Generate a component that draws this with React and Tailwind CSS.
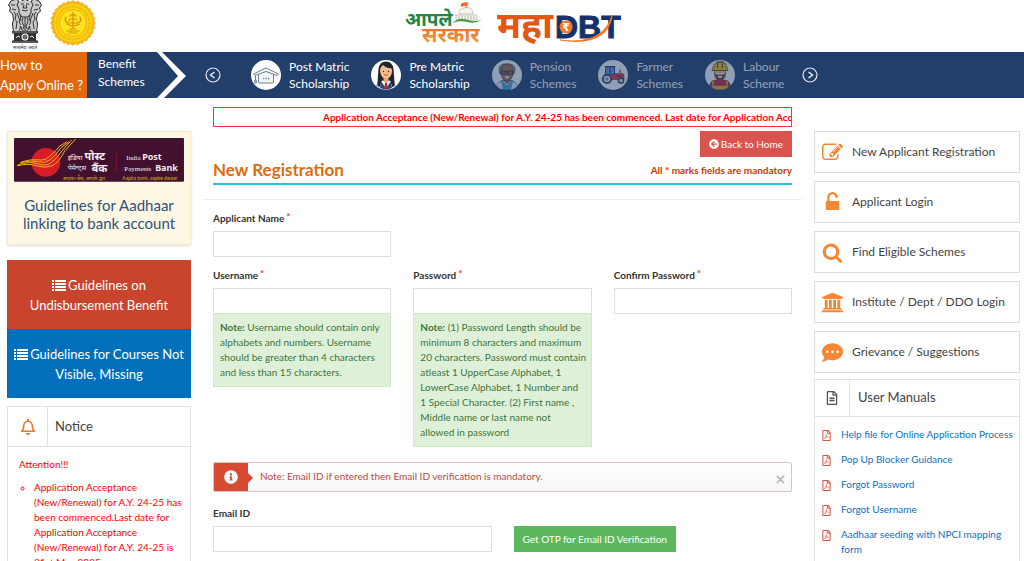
import React from "react";
import { FaArrowCircleLeft, FaCommentDots, FaInfoCircle, FaRegBell, FaRegFileAlt, FaRegFilePdf } from "react-icons/fa";

const schemes = [
  { title: ["Post Matric", "Scholarship"], Art: CapArt },
  { title: ["Pre Matric", "Scholarship"], Art: GirlArt },
  { title: ["Pension", "Schemes"], Art: ElderArt, dim: true },
  { title: ["Farmer", "Schemes"], Art: TractorArt, dim: true },
  { title: ["Labour", "Scheme"], Art: WorkerArt, dim: true },
];

const menu = [
  { label: "New Applicant Registration", Icon: PencilIcon },
  { label: "Applicant Login", Icon: UnlockIcon },
  { label: "Find Eligible Schemes", Icon: SearchIcon },
  { label: "Institute / Dept / DDO Login", Icon: BankIcon },
  { label: "Grievance / Suggestions", Icon: FaCommentDots },
];

const manuals = [
  "Help file for Online Application Process",
  "Pop Up Blocker Guidance",
  "Forgot Password",
  "Forgot Username",
  "Aadhaar seeding with NPCI mapping form",
];

/* ---------- icons ---------- */

function PencilIcon(props) {
  return (
    <svg viewBox="0 0 1792 1792" fill="currentColor" {...props}>
      <path d="M888 1184l116-116-152-152-116 116v56h96v96h56zm440-720q-16-16-33 1l-350 350q-17 17-1 33t33-1l350-350q17-17 1-33zm80 594v190q0 119-84.500 203.500t-203.500 84.500h-832q-119 0-203.500-84.500t-84.500-203.500v-832q0-119 84.500-203.500t203.500-84.500h832q63 0 117 25 15 7 18 23 3 17-9 29l-49 49q-14 14-32 8-23-6-45-6h-832q-66 0-113 47t-47 113v832q0 66 47 113t113 47h832q66 0 113-47t47-113v-126q0-13 9-22l64-64q15-15 35-7t20 29zm-96-738l288 288-672 672h-288v-288zm444 132l-92 92-288-288 92-92q28-28 68-28t68 28l152 152q28 28 28 68t-28 68z" />
    </svg>
  );
}

function UnlockIcon(props) {
  return (
    <svg viewBox="0 0 1792 1792" fill="currentColor" {...props}>
      <path d="M1376 768q40 0 68 28t28 68v576q0 40-28 68t-68 28h-960q-40 0-68-28t-28-68v-576q0-40 28-68t68-28h32v-320q0-185 131.500-316.500t316.500-131.500 316.500 131.500 131.500 316.500q0 26-19 45t-45 19h-64q-26 0-45-19t-19-45q0-106-75-181t-181-75-181 75-75 181v320h736z" />
    </svg>
  );
}

function SearchIcon(props) {
  return (
    <svg viewBox="0 0 1792 1792" fill="currentColor" {...props}>
      <path d="M1216 832q0-185-131.500-316.500t-316.500-131.500-316.500 131.500-131.500 316.500 131.500 316.500 316.500 131.500 316.500-131.500 131.500-316.500zm512 832q0 52-38 90t-90 38q-54 0-90-38l-343-342q-179 124-399 124-143 0-273.500-55.500t-225-150-150-225-55.500-273.500 55.500-273.500 150-225 225-150 273.500-55.500 273.500 55.500 225 150 150 225 55.500 273.500q0 220-124 399l343 343q37 37 37 90z" />
    </svg>
  );
}

function BankIcon(props) {
  return (
    <svg viewBox="-128 0 1920 1792" fill="currentColor" {...props}>
      <path d="M832 0l960 384v128h-128q0 26-20.500 45t-48.500 19h-1526q-28 0-48.500-19t-20.500-45h-128v-128zm-704 640h256v768h128v-768h256v768h128v-768h256v768h128v-768h256v768h59q28 0 48.500 19t20.500 45v64h-1664v-64q0-26 20.500-45t48.500-19h59v-768zm1595 960q28 0 48.500 19t20.500 45v128h-1920v-128q0-26 20.500-45t48.500-19h1782z" />
    </svg>
  );
}

function ListIcon() {
  return (
    <svg viewBox="0 0 14 11" fill="currentColor" shapeRendering="crispEdges" className="mr-[2px] inline-block h-[11px] w-[14px] align-[-1px]">
      <path d="M0 0h2v2H0zM3 0h11v2H3zM0 3h2v2H0zM3 3h11v2H3zM0 6h2v2H0zM3 6h11v2H3zM0 9h2v2H0zM3 9h11v2H3z" />
    </svg>
  );
}

function RoundArrow({ flip }) {
  return (
    <svg viewBox="0 0 16 16" fill="none" stroke="#e4e9f2" className="size-4">
      <circle cx="8" cy="8" r="7" strokeWidth="1.200" />
      <path d={flip ? "M6.500 5l4 3-4 3" : "M9.500 5l-4 3 4 3"} strokeWidth="1.500" />
    </svg>
  );
}

/* ---------- scheme pictures ---------- */

function CapArt() {
  return (
    <svg viewBox="0 0 30 30" className="size-[30px]">
      <circle cx="15" cy="15" r="15" fill="#fff" />
      <g fill="#f2f6f8" stroke="#5c7180" strokeWidth="0.900" strokeLinejoin="round">
        <path d="M7.500 13.500 15 11l7.500 2.500V22q0 1-1 1h-13q-1 0-1-1z" />
        <path d="M2.500 14 15 8l12.500 6-1.500 1.500L15 11.500 4 15.500z" />
        <path d="M4.500 15v5M3.800 20h1.500v3H3.800z" />
      </g>
      <path d="M12 18.500h1.500M14.500 18.500H16M17 18.500h1.500" stroke="#7e909d" strokeWidth="1.500" />
    </svg>
  );
}

function GirlArt() {
  return (
    <svg viewBox="0 0 30 30" className="size-[30px]">
      <circle cx="15" cy="15" r="15" fill="#fff" />
      <path d="M6.500 26C7 20 7 15 7.500 9Q8.500 1.500 15 1.500T22.500 9c.5 6 .5 11 1 17z" fill="#20242c" />
      <path d="M5.500 27q.5-5 6-6.500h7q5.500 1.500 6 6.500Q20 30 15 30T5.500 27z" fill="#f3f6fb" stroke="#26354e" strokeWidth="0.500" />
      <path d="M7 14q2 6 3.500 7L9 27l-2.500-1zM23 14q-2 6-3.500 7l1.500 6 2.500-1z" fill="#20242c" />
      <path d="M10.500 21.500 15 29l4.500-7.500 1.500 6.200Q15 31 9 27.700z" fill="#2a4776" />
      <path d="M12.500 17h5v4L15 23.500 12.500 21z" fill="#e8a173" />
      <path d="M9 11q0-4 3-6 3 3 8.500 3.500.8 1 .5 3.500-1 6.500-6 6.500T9 11z" fill="#f6bb8c" />
      <circle cx="12.500" cy="11.500" r="0.700" fill="#222" />
      <circle cx="17.500" cy="11.500" r="0.700" fill="#222" />
      <path d="M13 14.500q2 1.500 4 0" fill="none" stroke="#943c31" strokeWidth="0.800" />
      <path d="M14 23h2l.7 5L15 30l-1.700-2z" fill="#c0272d" />
    </svg>
  );
}

function ElderArt() {
  return (
    <svg viewBox="0 0 30 30" className="size-[30px]">
      <circle cx="15" cy="15" r="15" fill="#fff" />
      <path d="M5 26.500q.5-5 7-6.500h6q6.500 1.500 7 6.500Q20 30 15 30T5 26.500z" fill="#43a9d5" stroke="#25364b" strokeWidth="0.600" />
      <path d="M5 26.500q.4-3.500 4-5l2 8Q8 29 5 26.500zM25 26.500q-.4-3.500-4-5l-2 8q3-.5 6-3z" fill="#e1edf2" />
      <path d="M7.500 13Q5.500 5 12 4h6q6.500 1 4.500 9l-2 2h-11z" fill="#8d9399" stroke="#333" strokeWidth="0.600" />
      <path d="M9 10q1-6 6-6t6 6c.6 6-2 11-6 11s-6.600-5-6-11z" fill="#aa6b45" stroke="#3a2922" strokeWidth="0.600" />
      <path d="M9.500 11h4.500v3H9.500zM16 11h4.500v3H16zM14 12h2" fill="none" stroke="#222" strokeWidth="0.800" />
      <path d="M11.500 17q3.500-2.500 7 0L15 19z" fill="#eee" stroke="#444" strokeWidth="0.400" />
      <path d="m11.500 21 3.500 4 3.500-4" fill="#9b6444" stroke="#fff" strokeWidth="0.800" />
    </svg>
  );
}

function TractorArt() {
  return (
    <svg viewBox="0 0 30 30" className="size-[30px]">
      <circle cx="15" cy="15" r="15" fill="#fff" />
      <path d="M8 7h8.500v8H7z" fill="#5a9add" stroke="#23457d" />
      <path d="M6.500 6.500h11M12 7v7" stroke="#23457d" strokeWidth="1.200" />
      <path d="M8 14.500h8l1-1h7q2 0 2 2v4H12z" fill="#e5323f" stroke="#7d2039" strokeWidth="0.600" />
      <path d="M22 13V9.500M18.500 16H23" stroke="#27334c" />
      <circle cx="9" cy="19" r="4.200" fill="#dce6ef" stroke="#333e52" strokeWidth="1.800" />
      <circle cx="9" cy="19" r="1.500" fill="#8a93a3" />
      <circle cx="23" cy="20.500" r="2.600" fill="#dce6ef" stroke="#333e52" strokeWidth="1.500" />
    </svg>
  );
}

function WorkerArt() {
  return (
    <svg viewBox="0 0 30 30" className="size-[30px]">
      <circle cx="15" cy="15" r="15" fill="#fff" />
      <path d="M4.500 26q.5-5 6.500-6h8q6 1 6.500 6Q20 30 15 30T4.500 26z" fill="#df1b3f" stroke="#5b1426" strokeWidth="0.500" />
      <path d="M9 20.500v5h12v-5h2v7.500Q19 30 15 30t-8-2v-7.500z" fill="#e2b51e" stroke="#635118" strokeWidth="0.500" />
      <path d="M9.500 9v6q1 5.500 5.500 5.500t5.500-5.500V9z" fill="#f4bd93" stroke="#60382a" strokeWidth="0.600" />
      <path d="M9.500 13q1 7.500 5.500 7.500t5.500-7.500l-2.500 2h-6z" fill="#693b2a" />
      <path d="M12.500 16h5q-.5 2-2.500 2t-2.500-2z" fill="#fff" />
      <path d="M7.500 10.500Q7.500 2 15 1.500t7.500 9z" fill="#f4b719" stroke="#634d19" strokeWidth="0.700" />
      <path d="M12.500 8V2h5v6M6.500 10.500h17" fill="none" stroke="#634d19" strokeWidth="1.200" />
    </svg>
  );
}

/* ---------- logos ---------- */

function NationalEmblem() {
  return (
    <svg viewBox="0 0 36 52" role="img" aria-label="Emblem of India" className="h-[52px] w-9">
      <g fill="#c9c9c9" stroke="#2a2a2a" strokeWidth="1" strokeLinejoin="round">
        <path d="M4 1 1.500 5l2 3-1 3 3 3 1 5-1 5 1 8h6l1-6 2 5h5l2-5 1 6h6l1-8-1-5 1-5 3-3-1-3 2-3L32 1l-5-2-4 3-5-3-5 3-4-3z" />
        <path d="m12 1-2 4 2 4v4l3 4h6l3-4V9l2-4-2-4" />
      </g>
      <g fill="none" stroke="#222" strokeWidth="0.900">
        <path d="M14 4h3M19 4h3M17 5l-1 3h4l-1-3M15 10q3 2 6 0M4 5h4M28 5h4M5 9l4 1M27 10l4-1" />
        <path d="m7 12 2 3-1 4 2 3-1 7M29 12l-2 3 1 4-2 3 1 7M13 15l1 4-2 3 2 3M23 15l-1 4 2 3-2 3M18 17v13M16 18l-1 4 2 4-1 3M20 18l1 4-2 4 1 3M10 13l3 8M26 13l-3 8" />
      </g>
      <path d="M5 31h26v2l-2 1v6l2 1v2H5v-2l2-1v-6l-2-1z" fill="#333" />
      <path d="M6 32h24M6 42h24" stroke="#bbb" strokeWidth="0.600" />
      <circle cx="18" cy="37" r="3.500" fill="#fff" />
      <circle cx="18" cy="37" r="2" fill="#777" stroke="#222" strokeWidth="0.700" />
      <path d="m9 38 2-2 2 1M27 38l-2-2-2 1" stroke="#eee" fill="none" />
      <text x="18" y="49" textAnchor="middle" fontSize="5" fill="#333">सत्यमेव जयते</text>
    </svg>
  );
}

function StateSeal() {
  const rays = Array.from({ length: 28 }, (_, i) => i * (360 / 28));
  return (
    <svg viewBox="0 0 46 46" role="img" aria-label="Maharashtra seal" className="size-[46px]">
      {rays.map((a) => (
        <circle key={a} cx="23" cy="2.700" r="2" fill="#f9c51c" stroke="#ef9d20" strokeWidth="0.600" transform={`rotate(${a} 23 23)`} />
      ))}
      <circle cx="23" cy="23" r="20" fill="#fbd50e" stroke="#ee9d1b" strokeWidth="0.800" />
      <circle cx="23" cy="23" r="16.500" fill="none" stroke="#eeb012" strokeWidth="2.200" strokeDasharray="1.300 1" />
      <circle cx="23" cy="23" r="13.500" fill="#ffe41c" stroke="#f0a416" strokeWidth="0.900" />
      <g fill="none" stroke="#d98b12" strokeWidth="1.200" strokeLinecap="round">
        <path d="M23 12v17M20 16q3-3 6 0M19 20q4-3 8 0M16 17q-2 5 3 6h8q5-1 3-6M17 24q6 4 12 0M20 29h6M17 31h12M19 33h8M15 19l1 3M31 19l-1 3" />
      </g>
    </svg>
  );
}

function AapleSarkarLogo() {
  return (
    <svg viewBox="0 0 78 46" role="img" aria-label="Aaple Sarkar" className="h-[46px] w-[78px]">
      <path d="M54 14q0-6 7-6.500T68 14zM51 15h21v5H51z" fill="#f4f3ec" stroke="#a7ac97" strokeWidth="0.600" />
      <path d="M54 16v3M57 16v3M60 16v3M63 16v3M66 16v3M69 16v3" stroke="#9ba391" strokeWidth="0.700" />
      <path d="M61 8V2" stroke="#777" strokeWidth="0.600" />
      <path d="M56 4q3-3 8-1l-2 2 2 2q-4-2-8 0z" fill="#f26a26" />
      <path d="M47 23q7-6 14-3.500t16 .5q-7 4-15 2t-15 1z" fill="#4a9d43" />
      <defs>
        <linearGradient id="sarkar" x1="0" x2="0" y1="0" y2="1">
          <stop offset="0" stopColor="#ed5c28" />
          <stop offset="1" stopColor="#f3a13a" />
        </linearGradient>
      </defs>
      <text x="0" y="26" fontSize="19" fontWeight="700" fill="#23863f">आपले</text>
      <text x="17" y="42" fontSize="21" fontWeight="700" fill="url(#sarkar)">सरकार</text>
    </svg>
  );
}

function MahaDbtLogo() {
  return (
    <svg viewBox="0 0 128 38" role="img" aria-label="MahaDBT" className="h-[38px] w-[128px]">
      <text x="0" y="31" fontSize="37" fontWeight="700" fill="#e55612">महा</text>
      <text x="58" y="31" fontSize="32" fontWeight="700" fontFamily="Liberation Sans, sans-serif" fill="#15326d" stroke="#15326d">DBT</text>
      <circle cx="69" cy="20" r="6.500" fill="#f47721" />
      <text x="69" y="24" textAnchor="middle" fontSize="11" fontWeight="700" fontFamily="DejaVu Sans, sans-serif" fill="#fff">₹</text>
      <path d="M63 33q43 6 52-24-5 31-52 24" fill="#f47721" stroke="#f47721" strokeWidth="1.200" />
    </svg>
  );
}

function BankBanner() {
  return (
    <svg viewBox="0 0 171 44" role="img" aria-label="India Post Payments Bank" className="block w-full">
      <rect width="171" height="44" rx="1" fill="#42112e" />
      <circle cx="32" cy="24.500" r="14.500" fill="#d71e27" />
      <g fill="none" stroke="#f1b51c" strokeWidth="1">
        <path d="M3 28q12-3 20 0t15 0q7-3 13-15l11-12" />
        <path d="M4 27q12-4 20-1t13-1q6-4 12-13L58 2" />
        <path d="M6 25q11-3 18-1t12-2q6-4 11-12l8-6" />
        <path d="M8 24q9-3 16-2t11-3q6-4 11-11l7-4" />
      </g>
      <g fill="#f3eaf0">
        <text x="54" y="22" fontSize="7">इंडिया</text>
        <text x="71" y="22" fontSize="11" fontWeight="700">पोस्ट</text>
        <text x="54" y="32" fontSize="7">पेमेन्ट्स</text>
        <text x="78" y="34" fontSize="11" fontWeight="700">बैंक</text>
      </g>
      <path d="M103 15v18" stroke="#7a1733" />
      <g fill="#f3eaf0" fontFamily="Liberation Serif, serif">
        <text x="113" y="22" fontSize="7">India</text>
        <text x="129" y="22" fontSize="9" fontWeight="700" fontFamily="Noto Sans, sans-serif">Post</text>
        <text x="111" y="33" fontSize="7">Payments</text>
        <text x="142" y="33" fontSize="9" fontWeight="700" fontFamily="Noto Sans, sans-serif">Bank</text>
      </g>
      <g fill="#d0b51f" fontSize="5">
        <text x="49" y="42">आपका बैंक, आपके द्वार</text>
        <text x="109" y="42">Aapka bank, aapke dwaar</text>
      </g>
    </svg>
  );
}

/* ---------- page parts ---------- */

function Header() {
  return (
    <header className="relative flex h-[52px] items-start justify-center">
      <div className="absolute top-0 left-[7px] flex gap-[7px]">
        <NationalEmblem />
        <StateSeal />
      </div>
      <div className="flex items-start gap-[14px] pl-[6px]">
        <AapleSarkarLogo />
        <div className="pt-[7px]">
          <MahaDbtLogo />
        </div>
      </div>
    </header>
  );
}

function SchemeBar() {
  return (
    <nav className="flex h-[46px] items-center bg-[#223e6b] text-[12px] leading-[17px] text-white">
      <a href="#apply" className="flex h-full w-[87px] items-center bg-[#e0680f] text-[13px] leading-5 whitespace-nowrap">
        <span>
          How to
          <br />
          Apply Online ?
        </span>
      </a>
      <a href="#benefits" className="w-[70px] pb-1 pl-[11px] leading-[18px]">
        Benefit Schemes
      </a>
      <svg viewBox="0 0 29 46" className="h-full w-[29px]">
        <path d="M0 0h5l24 24-22 22H0l21-22z" fill="#fff" />
      </svg>
      <button type="button" aria-label="Previous schemes" className="ml-[19px]">
        <RoundArrow />
      </button>
      <div className="mr-[18px] ml-[30px] flex gap-[22px]">
        {schemes.map(({ title, Art, dim }) => (
          <a key={title.join(" ")} href="#scheme" className={dim ? "flex items-center gap-2 opacity-50" : "flex items-center gap-2"}>
            <Art />
            <span>
              {title[0]}
              <br />
              {title[1]}
            </span>
          </a>
        ))}
      </div>
      <button type="button" aria-label="Next schemes">
        <RoundArrow flip />
      </button>
    </nav>
  );
}

function LeftColumn() {
  return (
    <aside className="w-[184px] shrink-0 pt-6">
      <a href="#aadhaar" className="block h-[114px] border border-[#faebcc] bg-[#fcf8e3] p-[6px] text-center text-[15px] leading-[18px] text-[#31507a] shadow-sm">
        <BankBanner />
        <span className="mt-[14px] block whitespace-nowrap">
          Guidelines for Aadhaar
          <br />
          linking to bank account
        </span>
      </a>
      <div className="mt-[15px] text-center text-[13px] leading-5 text-white">
        <a href="#undisbursement" className="flex h-[69px] items-center justify-center bg-[#c9442d]">
          <span>
            <ListIcon />
            Guidelines on
            <br />
            Undisbursement Benefit
          </span>
        </a>
        <a href="#courses" className="flex h-[69px] items-center justify-center bg-[#026fbd]">
          <span>
            <ListIcon />
            Guidelines for Courses Not
            <br />
            Visible, Missing
          </span>
        </a>
      </div>
      <section className="mt-2 border border-[#e2e2e2]">
        <div className="flex h-10 items-center border-b border-[#e2e2e2]">
          <div className="flex h-full w-10 items-center justify-center border-r border-[#e2e2e2]">
            <FaRegBell className="size-4 text-[#e87722]" />
          </div>
          <h2 className="pl-[7px] text-[13px] text-[#444]">Notice</h2>
        </div>
        <div className="py-[10px] pr-1 pl-[11px] text-[10px] leading-[15px] text-[#f00]">
          <p>Attention!!!</p>
          <ul className="mt-2 list-[circle] pl-[15px]">
            <li>
              Application Acceptance (New/Renewal) for A.Y. 24-25 has been commenced.Last date for Application Acceptance (New/Renewal)
              for A.Y. 24-25 is 31st May 2025
            </li>
          </ul>
        </div>
      </section>
    </aside>
  );
}

function Field({ id, label, type = "text", required = true, children }) {
  return (
    <div>
      <label htmlFor={id} className="flex gap-[2px] pb-1 text-[10px] leading-[17px] font-bold text-[#333]">
        {label}
        {required && <span className="leading-[13px] text-[#f33]">*</span>}
      </label>
      <input id={id} type={type} className="block h-[26px] w-full border border-[#dedede] px-2 text-[10px] outline-none" />
      {children}
    </div>
  );
}

function Note({ children }) {
  return (
    <p className="-mt-px border border-[#d2e8c6] bg-[#dff0d8] py-[6px] pr-px pl-[6px] text-[10px] leading-[15px] text-[#3c763d]">
      <b>Note:</b> {children}
    </p>
  );
}

function Registration() {
  return (
    <main className="min-w-0 flex-1">
      <div className="h-5 overflow-hidden border border-[#f33] pl-[109px] text-[10px] leading-[18px] font-bold whitespace-nowrap text-[#f00]">
        Application Acceptance (New/Renewal) for A.Y. 24-25 has been commenced. Last date for Application Acceptance
      </div>
      <div className="mt-1 flex justify-end">
        <a href="#home" className="flex h-[26px] items-center gap-[2px] bg-[#d9534f] px-[9px] text-[10px] text-white">
          <FaArrowCircleLeft className="size-[10px]" />
          Back to Home
        </a>
      </div>
      <div className="flex h-7 items-center justify-between border-b-2 border-[#26c0dc]">
        <h1 className="text-[17px] font-bold text-[#dd6b10]">New Registration</h1>
        <span className="text-[10px] font-bold text-[#c9380a]">All * marks fields are mandatory</span>
      </div>
      <form className="-mx-[10px] mt-[14px] border-t border-[#f0ede2] px-[10px] pt-[10px]">
        <div className="grid grid-cols-3 gap-x-[22px] gap-y-[10px]">
          <div className="col-span-3 grid grid-cols-3 gap-x-[22px]">
            <Field id="applicant" label="Applicant Name" />
          </div>
          <Field id="username" label="Username">
            <Note>Username should contain only alphabets and numbers. Username should be greater than 4 characters and less than 15 characters.</Note>
          </Field>
          <Field id="password" label="Password" type="password">
            <Note>
              (1) Password Length should be minimum 8 characters and maximum 20 characters. Password must contain atleast 1 UpperCase
              Alphabet, 1 LowerCase Alphabet, 1 Number and 1&nbsp;Special Character. (2) First name , Middle name or last name not
              <br />
              allowed in password
            </Note>
          </Field>
          <Field id="confirm" label="Confirm Password" type="password" />
        </div>
        <div className="mt-[15px] flex h-[30px] overflow-hidden rounded-[2px] border border-[#e3c0c6] bg-gradient-to-b from-white to-[#f7f7f7]">
          <svg viewBox="0 0 39 28" className="h-full w-[39px]">
            <path d="M0 0h34v10l5 5-5 5v8H0z" fill="#d94a33" />
            <FaInfoCircle x="10" y="7" size={14} color="#fff" />
          </svg>
          <p className="flex-1 pl-[7px] text-[10px] leading-[27px] text-[#b94a48]">Note: Email ID if entered then Email ID verification is mandatory.</p>
          <button type="button" aria-label="Close" className="px-[6px] text-[#bbb]">
            <svg viewBox="0 0 10 10" stroke="currentColor" strokeWidth="2" className="mt-1 size-[9px]">
              <path d="M1 1l8 8M9 1L1 9" />
            </svg>
          </button>
        </div>
        <div className="mt-[13px] grid grid-cols-2 items-end gap-x-[22px]">
          <Field id="email" label="Email ID" type="email" required={false} />
          <div>
            <button type="button" className="block h-[26px] bg-[#5cb85c] px-[9px] text-[10px] whitespace-nowrap text-white">
              Get OTP for Email ID Verification
            </button>
          </div>
        </div>
      </form>
    </main>
  );
}

function RightColumn() {
  return (
    <aside className="w-[206px] shrink-0 pt-6">
      <nav className="flex flex-col gap-2">
        {menu.map(({ label, Icon }) => (
          <a key={label} href="#menu" className="flex h-[42px] items-center gap-[9px] border border-[#ddd] pl-[7px] text-[12px] whitespace-nowrap text-[#444]">
            <Icon className="size-[21px] text-[#f58634]" />
            {label}
          </a>
        ))}
      </nav>
      <section className="mt-[6px] border border-[#e2e2e2]">
        <div className="flex h-[37px] items-center border-b border-[#e2e2e2]">
          <div className="flex h-full w-[35px] items-center justify-center border-r border-[#e2e2e2]">
            <FaRegFileAlt className="size-[14px] text-[#555]" />
          </div>
          <h2 className="pl-2 text-[13px] text-[#444]">User Manuals</h2>
        </div>
        <ul className="flex flex-col gap-[10px] py-[10px] pl-[6px] text-[10px] leading-[15px]">
          {manuals.map((m) => (
            <li key={m} className="flex gap-[9px]">
              <FaRegFilePdf className="mt-[3px] size-[11px] shrink-0 text-[#d9553f]" />
              <a href="#manual" className="text-[#0c6fc0]">
                {m}
              </a>
            </li>
          ))}
        </ul>
      </section>
    </aside>
  );
}

export default function App() {
  return (
    <div className="h-screen overflow-hidden bg-white font-['Lato','Noto_Sans',sans-serif]">
      <Header />
      <SchemeBar />
      <div className="flex gap-[22px] pt-[9px] pr-[4px] pl-[7px]">
        <LeftColumn />
        <Registration />
        <RightColumn />
      </div>
    </div>
  );
}
